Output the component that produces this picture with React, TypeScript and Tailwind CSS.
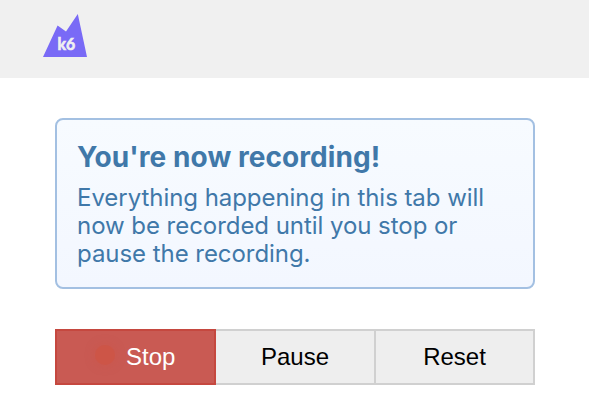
function Logo() {
  return (
    <svg width="44" height="43" viewBox="0 0 44 43" aria-label="k6">
      <path d="M0 43 14.6 11.5 23 17.5 34.8 0 44 43Z" fill="#796af6" />
      <text x="14.6" y="36" fontFamily="Lato, sans-serif" fontWeight="700" fontSize="17" textLength="17.6" lengthAdjust="spacingAndGlyphs" fill="#f0f0f0" stroke="#f0f0f0" strokeWidth="0.7">
        k6
      </text>
    </svg>
  );
}

export default function App() {
  return (
    <div className="flex h-[419px] w-[589px] flex-col bg-white">
      <header className="h-[78px] bg-[#f0f0f0] pl-[43px] pt-[14px]">
        <Logo />
      </header>
      <main className="flex flex-col gap-10 px-[54px] pl-[55px] pt-10">
        <section className="h-[171px] rounded-lg border-2 border-[#a3c0e2] bg-linear-to-b from-[#f7fbff] to-[#f3f7ff] px-5 pt-5 font-['Inter',sans-serif] text-[#4078a9]">
          <h1 className="whitespace-nowrap text-[28px] font-bold leading-[34px] tracking-[0.07px]">You&apos;re now recording!</h1>
          <p className="mt-[10px] whitespace-nowrap text-[24px] leading-7 tracking-[-0.05px]">
            Everything happening in this tab will
            <br />
            now be recorded until you stop or
            <br />
            pause the recording.
          </p>
        </section>
        <div className="flex h-14 font-['Liberation_Sans',sans-serif] text-[24px] text-black">
          <button className="flex w-[161px] items-center border-2 border-[#c5483f] bg-[#c95a53] pl-[38px] text-white">
            <span className="mb-1 mr-[11px] size-5 rounded-full bg-[#cd5547] shadow-[0_0_10px_rgba(205,85,71,0.6)]" />
            Stop
          </button>
          <button className="w-40 border-2 border-l-0 border-[#d0d0d0] bg-[#eeeeee]">Pause</button>
          <button className="w-[159px] border-2 border-l-0 border-[#d0d0d0] bg-[#eeeeee]">Reset</button>
        </div>
      </main>
    </div>
  );
}
